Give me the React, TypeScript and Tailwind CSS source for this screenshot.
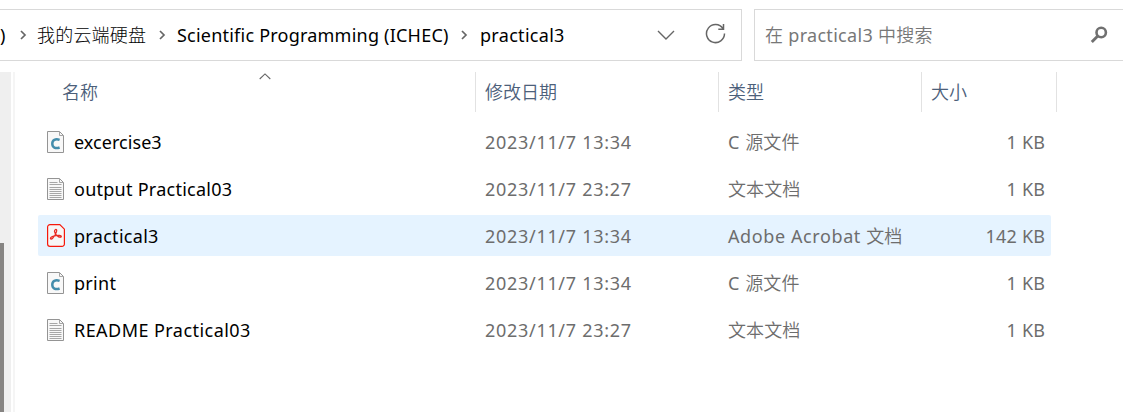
import React from "react";

type FileKind = "c" | "text" | "pdf";

interface FileRow {
  name: string;
  spacing: string;
  date: string;
  latinType: string;
  hanType: string;
  size: string;
  kind: FileKind;
  selected?: boolean;
}

const files: FileRow[] = [
  { name: "excercise3", spacing: "tracking-[0.05px]", date: "2023/11/7 13:34", latinType: "C", hanType: "源文件", size: "1 KB", kind: "c" },
  { name: "output Practical03", spacing: "tracking-[0.26px]", date: "2023/11/7 23:27", latinType: "", hanType: "文本文档", size: "1 KB", kind: "text" },
  { name: "practical3", spacing: "tracking-[0.3px]", date: "2023/11/7 13:34", latinType: "Adobe Acrobat", hanType: "文档", size: "142 KB", kind: "pdf", selected: true },
  { name: "print", spacing: "tracking-[0.3px]", date: "2023/11/7 13:34", latinType: "C", hanType: "源文件", size: "1 KB", kind: "c" },
  { name: "README Practical03", spacing: "tracking-[0.45px]", date: "2023/11/7 23:27", latinType: "", hanType: "文本文档", size: "1 KB", kind: "text" },
];

function FileIcon({ kind }: { kind: FileKind }) {
  if (kind === "pdf") {
    return (
      <svg width="18" height="23" viewBox="0 0 18 23" fill="none" className="shrink-0">
        <path d="M3 .6h9.8l4.6 4.6V20a2.4 2.4 0 0 1-2.4 2.4H3A2.4 2.4 0 0 1 .6 20V3A2.4 2.4 0 0 1 3 .6Z" fill="#f7f6f6" stroke="#f5180b" strokeWidth="1.2" />
        <path d="M8.2 5.7c1.1-.9 1.8.2 1.3 1.9-.7 2.6-2.3 5.1-3.9 6.7-1 1-2.3.9-2.1-.1.3-1.3 2.8-2.1 5.3-2.5 2.3-.4 5.5-.5 5.5.7s-1.9 1-3.3 0c-1.8-1.1-3.3-3-3.5-4.9 0-.8.2-1.5.7-1.8Z" stroke="#e92b23" strokeWidth="1.3" />
      </svg>
    );
  }
  return (
    <svg width="18" height="23" viewBox="0 0 18 23" fill="none" className="shrink-0">
      <path d="M.5 1.5H12.5l4 4v17H.5v-21Z" fill="#f8f8f8" stroke="#949494" />
      <path d="M12.5 1.5v4h4" stroke="#a5a5a5" />
      {kind === "c" ? (
        <path d="M12.6 9.9c-4.2-1.5-7.3.2-7.3 3.9 0 3.6 3.1 5.2 7.3 3.7" stroke="#438dac" strokeWidth="2.5" />
      ) : (
        <path d="M2.5 5.5h8M2.5 7.5h12M2.5 10.5h12M2.5 12.5h12M2.5 14.5h12M2.5 16.5h12M2.5 18.5h12M2.5 20.5h12" stroke="#a7a7a7" />
      )}
    </svg>
  );
}

function Crumb() {
  return (
    <svg width="7" height="12" viewBox="0 0 7 12" fill="none" className="shrink-0">
      <path d="m1 2 4 4-4 4" stroke="#666" strokeWidth="1.7" />
    </svg>
  );
}

export default function App() {
  return (
    <div className="flex h-[412px] w-[1123px] flex-col overflow-hidden whitespace-pre bg-white pt-[9px] font-['Noto_Sans','Noto_Sans_CJK_SC',sans-serif] text-[18px] leading-6 text-black">
      <header className="flex h-[52px] shrink-0 gap-3">
        <div className="flex w-[742px] items-center border border-l-0 border-[#d9d9d9]">
          <span className="w-5">)</span>
          <Crumb />
          <span className="ml-[10px] w-[122px] font-light tracking-[0.2px]">我的云端硬盘</span>
          <Crumb />
          <span className="ml-[11px] w-[284px] tracking-[0.22px]">Scientific Programming (ICHEC)</span>
          <Crumb />
          <span className="ml-[12px] flex-1 tracking-[0.3px]">practical3</span>
          <svg width="18" height="11" viewBox="0 0 18 11" fill="none" className="mr-[30px]">
            <path d="m1 1 8 8 8-8" stroke="#666" strokeWidth="1.4" />
          </svg>
          <svg width="21" height="21" viewBox="0 0 21 21" fill="none" className="mr-[15px] -mt-[3px]">
            <path d="M18 5.6A9 9 0 1 0 19.5 10.5M18.5 1v5.2h-5.2" stroke="#666" strokeWidth="1.5" />
          </svg>
        </div>
        <div className="flex flex-1 items-center border border-r-0 border-[#d9d9d9] pl-[10px] text-[#777]">
          <span className="flex-1 tracking-[0.3px]"><span className="font-[350]">在</span> practical3 <span className="font-[350]">中搜索</span></span>
          <svg width="18" height="18" viewBox="0 0 18 18" fill="none" className="mr-[15px]">
            <circle cx="11.2" cy="6.5" r="4.7" stroke="#707070" strokeWidth="2.6" />
            <path d="m7.8 9.9-6 6.1" stroke="#707070" strokeWidth="2.9" />
          </svg>
        </div>
      </header>
      <main className="mt-[11px] flex min-h-0 flex-1">
        <div className="flex w-[11px] flex-col bg-[#efefef] pt-[171px]">
          <div className="w-1 flex-1 bg-[#868482]" />
        </div>
        <div className="ml-[2px] w-[2px] bg-[#f5f5f5]" />
        <section className="ml-[23px] w-[1019px]">
          <div className="flex h-10 items-center font-[350] text-[#4c607a]">
            <div className="relative flex h-full w-[438px] items-center border-r border-[#e2e2e2] pl-6">
              名称
              <svg width="12" height="7" viewBox="0 0 12 7" fill="none" className="absolute left-[221px] top-px">
                <path d="m.7 6 5.3-5.1L11.3 6" stroke="#666" strokeWidth="1.1" />
              </svg>
            </div>
            <div className="flex h-full w-[243px] items-center border-r border-[#e2e2e2] pl-[9px]">修改日期</div>
            <div className="flex h-full w-[203px] items-center border-r border-[#e2e2e2] pl-[9px]">类型</div>
            <div className="flex h-full w-[135px] items-center border-r border-[#e2e2e2] pl-[9px]">大小</div>
          </div>
          <div className="mt-[9px] flex w-[1013px] flex-col gap-[6px]">
            {files.map((file) => (
              <div key={file.name} className={`flex h-[41px] items-center rounded-[2px] pl-[9px] pr-[6px] text-[#6d6d6d] ${file.selected ? "bg-[#e5f3ff]" : ""}`}>
                <FileIcon kind={file.kind} />
                <span className={`ml-[9px] w-[411px] text-black ${file.spacing}`}>{file.name}</span>
                <span className="w-[243px] tracking-[0.7px]">{file.date}</span>
                <span className="flex-1">{file.latinType && <span className="tracking-[0.6px]">{file.latinType} </span>}<span className="font-[350] tracking-[0.1px]">{file.hanType}</span></span>
                <span className="-mr-[0.2px] tracking-[0.2px]">{file.size}</span>
              </div>
            ))}
          </div>
        </section>
      </main>
    </div>
  );
}
